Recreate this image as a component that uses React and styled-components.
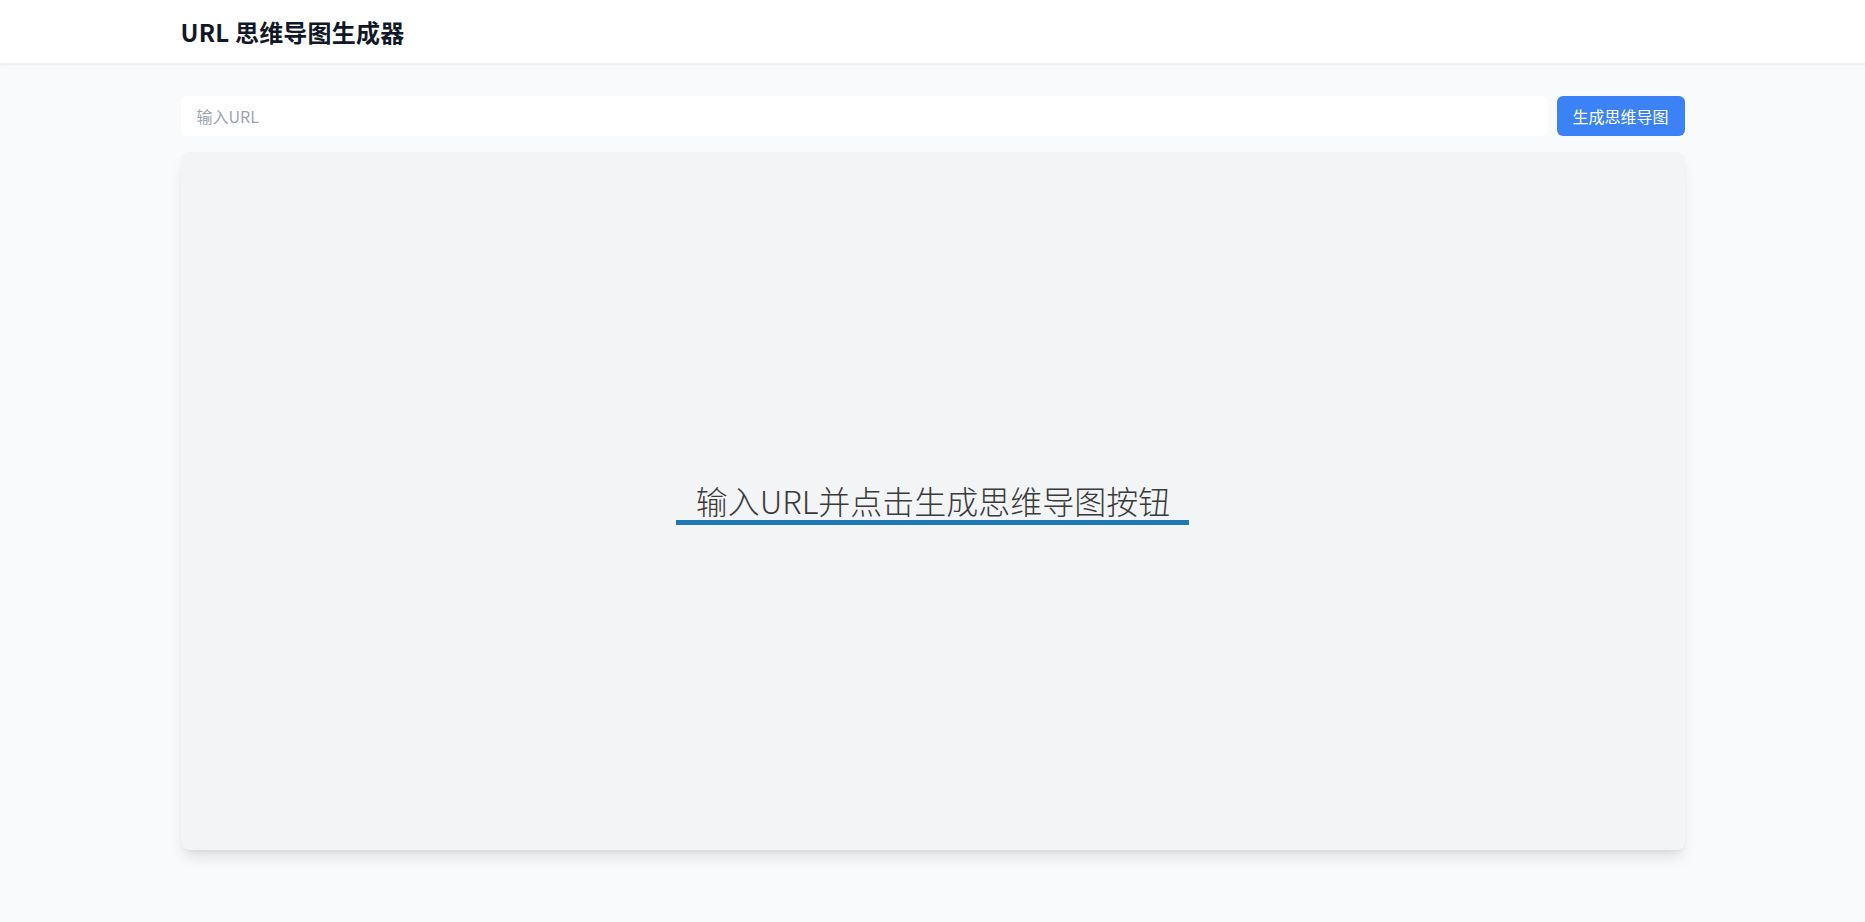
import React, { useState } from "react";
import styled, { createGlobalStyle } from "styled-components";

// global page styles
const GlobalStyle = createGlobalStyle`
  * {
    box-sizing: border-box;
  }
  body {
    margin: 0;
    background: #f9fafb;
    font-family: "Noto Sans", "Noto Sans CJK SC", sans-serif;
    color: #111827;
  }
`;

const Page = styled.div`
  min-height: 100vh;
  background: #f9fafb;
`;

const Header = styled.header`
  background: #ffffff;
  box-shadow: 0 1px 2px rgba(0, 0, 0, 0.06);
  border-bottom: 1px solid #eef0f3;
`;

const Container = styled.div`
  max-width: 1536px;
  margin: 0 auto;
  padding: 0 16px;
`;

const HeaderInner = styled(Container)`
  height: 63px;
  display: flex;
  align-items: center;
`;

const Title = styled.h1`
  margin: 0;
  font-size: 24px;
  line-height: 32px;
  font-weight: 700;
  letter-spacing: 0.2px;
  color: #111827;
  font-family: "Noto Sans CJK SC", "Noto Sans", sans-serif;
`;

const Main = styled(Container)`
  padding-top: 32px;
  padding-bottom: 32px;
`;

const Form = styled.form`
  display: flex;
  gap: 9px;
  margin-bottom: 16px;
`;

const Input = styled.input`
  flex: 1;
  height: 40px;
  padding: 0 16px;
  border: none;
  border-radius: 6px;
  background: #ffffff;
  font-size: 16px;
  font-family: "Noto Sans CJK SC", "Noto Sans", sans-serif;
  color: #111827;
  outline: none;
  &::placeholder {
    color: #9ca3af;
  }
`;

const Button = styled.button`
  width: 128px;
  height: 40px;
  border: none;
  border-radius: 6px;
  background: #3b82f6;
  color: #ffffff;
  font-size: 16px;
  font-family: "Noto Sans CJK SC", "Noto Sans", sans-serif;
  cursor: pointer;
  &:hover {
    background: #2563eb;
  }
`;

const Canvas = styled.div`
  height: 698px;
  background: #f3f4f6;
  border-radius: 8px;
  box-shadow: 0 10px 15px -3px rgba(0, 0, 0, 0.1),
    0 4px 6px -4px rgba(0, 0, 0, 0.1);
  display: flex;
  align-items: center;
  justify-content: center;
`;

const RootNode = styled.div`
  display: flex;
  flex-direction: column;
  align-items: stretch;
  margin-top: 2px;
`;

const NodeText = styled.div`
  padding: 0 19px 0 20px;
  font-size: 32px;
  line-height: 40px;
  font-weight: 300;
  color: #3a3a3a;
  font-family: "Noto Sans CJK SC", "Noto Sans", sans-serif;
  white-space: nowrap;
`;

const NodeLine = styled.div`
  height: 5px;
  background: ${(p) => p.color};
`;

const App = () => {
  const [url, setUrl] = useState("");

  const handleSubmit = (e) => {
    e.preventDefault();
  };

  return (
    <Page>
      <GlobalStyle />
      <Header>
        <HeaderInner>
          <Title>URL 思维导图生成器</Title>
        </HeaderInner>
      </Header>
      <Main>
        <Form onSubmit={handleSubmit}>
          <Input
            placeholder="输入URL"
            value={url}
            onChange={(e) => setUrl(e.target.value)}
          />
          <Button type="submit">生成思维导图</Button>
        </Form>
        <Canvas>
          <RootNode>
            <NodeText>输入URL并点击生成思维导图按钮</NodeText>
            <NodeLine color="#1f77b4" />
          </RootNode>
        </Canvas>
      </Main>
    </Page>
  );
};

export default App;
